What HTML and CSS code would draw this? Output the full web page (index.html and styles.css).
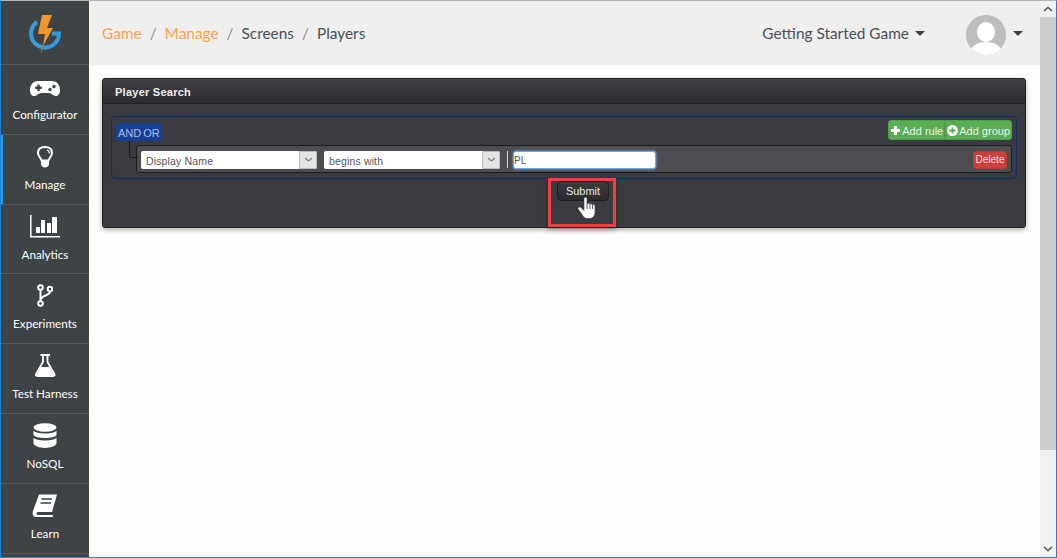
FILE: index.html
```html
<!DOCTYPE html>
<html lang="en">
<head>
<meta charset="utf-8">
<title>Player Search</title>
<link rel="stylesheet" href="styles.css">
</head>
<body>
<div class="window">
  <aside class="sidebar">
    <div class="logo">
      <svg width="36" height="40" viewBox="0 0 36 40">
        <path d="M10 9 A14 14 0 1 0 32 20.500 L25 20.500" fill="none" stroke="#3a9ad9" stroke-width="4"/>
        <path d="M15 2 L25 2 L20 15 L26 15 L16 33 L18 21 L11 21 Z" fill="#f0962e"/>
        <path d="M16 33 L14 40" stroke="#a87a3c" stroke-width="1"/>
      </svg>
    </div>
    <a class="nav-item">
      <svg class="nav-icon" width="30" height="26" viewBox="0 0 30 26"><path d="M8 7 H22 C27 7 30 11 30 16 C30 20 28 22 25.500 22 C23 22 21.500 19 19 19 H11 C8.500 19 7 22 4.500 22 C2 22 0 20 0 16 C0 11 3 7 8 7 Z" fill="#fff"/><path d="M8.500 10.500 V17 M5.200 13.800 H11.800" stroke="#3e4345" stroke-width="2.400"/><circle cx="20" cy="15.500" r="1.700" fill="#3e4345"/><circle cx="24" cy="12.500" r="1.700" fill="#3e4345"/></svg>
      <span>Configurator</span>
    </a>
    <a class="nav-item active">
      <svg class="nav-icon" width="18" height="26" viewBox="0 0 18 26"><path d="M9 3 C4.500 3 2 5.500 2 9 C2 12 4.500 13.500 5.500 16.500 H12.500 C13.500 13.500 16 12 16 9 C16 5.500 13.500 3 9 3 Z" fill="none" stroke="#fff" stroke-width="2"/><path d="M11 6 C12.500 6.500 13.500 8 13.500 9.500" fill="none" stroke="#fff" stroke-width="1.200"/><path d="M5 17 H13 V20 C13 22 11 23.500 9 23.500 C7 23.500 5 22 5 20 Z" fill="#fff"/></svg>
      <span>Manage</span>
    </a>
    <a class="nav-item">
      <svg class="nav-icon" width="30" height="26" viewBox="0 0 30 26"><path d="M.8 1 V22.800 H30" fill="none" stroke="#fff" stroke-width="1.500"/><path d="M6 13 H10 V19 H6 Z M11 6 H15 V19 H11 Z M17 9 H21 V19 H17 Z M22 3 H27 V19 H22 Z" fill="#fff"/></svg>
      <span>Analytics</span>
    </a>
    <a class="nav-item">
      <svg class="nav-icon" width="16" height="26" viewBox="0 0 16 26"><g fill="none" stroke="#fff" stroke-width="2"><circle cx="3.500" cy="4.500" r="2.300"/><circle cx="13" cy="6" r="2.300"/><circle cx="3.500" cy="20.500" r="2.300"/><path d="M3.500 7 V18 M13 8.500 C13 13 4 12 3.500 17"/></g></svg>
      <span>Experiments</span>
    </a>
    <a class="nav-item">
      <svg class="nav-icon" width="24" height="26" viewBox="0 0 24 26"><path d="M7.500 2 H17 M10 2 V9 L3 21 C2.500 22.500 3 23 4.500 23 H20 C21.500 23 22 22.500 21.500 21 L14.500 9 V2" fill="none" stroke="#fff" stroke-width="1.800"/><path d="M8 14 H16.500 L21.500 23 H3 Z" fill="#fff"/></svg>
      <span>Test Harness</span>
    </a>
    <a class="nav-item">
      <svg class="nav-icon" width="24" height="26" viewBox="0 0 24 26"><ellipse cx="12" cy="4.500" rx="11.500" ry="4.200" fill="#fff"/><path d="M.5 7.500 C2 11.500 22 11.500 23.500 7.500 V12 C22 16 2 16 .5 12 Z M.5 14.500 C2 18.500 22 18.500 23.500 14.500 V20 C22 26.500 2 26.500 .5 20 Z" fill="#fff"/></svg>
      <span>NoSQL</span>
    </a>
    <a class="nav-item">
      <svg class="nav-icon" width="26" height="26" viewBox="0 0 26 26"><path d="M7 1.500 H25 L20 19 H6 C4 19 4 22 6 22 H21 L20.500 24 H4 C1 24 0 21 1 18 Z" fill="#fff"/><path d="M9.500 6 H20 M8.500 10 H19" stroke="#3e4345" stroke-width="1.500"/></svg>
      <span>Learn</span>
    </a>
  </aside>

  <div class="main">
    <header class="topbar">
      <nav class="crumbs">
        <a class="crumb-link">Game</a><i>/</i>
        <a class="crumb-link">Manage</a><i>/</i>
        <span>Screens</span><i>/</i>
        <span>Players</span>
      </nav>
      <div class="game-select">Getting Started Game <b class="caret"></b></div>
      <div class="user">
        <svg width="40" height="40" viewBox="0 0 40 40"><defs><clipPath id="av"><circle cx="20" cy="20" r="20"/></clipPath></defs><circle cx="20" cy="20" r="20" fill="#bdbdbd"/><g clip-path="url(#av)" fill="#fff"><ellipse cx="20" cy="17" rx="9" ry="10"/><ellipse cx="20" cy="38" rx="16" ry="11"/></g></svg>
        <b class="caret"></b>
      </div>
    </header>

    <section class="content">
      <div class="panel">
        <h2 class="panel-title">Player Search</h2>
        <div class="panel-body">
          <div class="group">
            <div class="group-head">
              <div class="conds"><span>AND</span><span>OR</span></div>
              <div class="add-btns">
                <button class="btn-green"><svg width="11" height="11" viewBox="0 0 11 11"><path d="M5.500 1 V10 M1 5.500 H10" stroke="#fff" stroke-width="3"/></svg> Add rule</button>
                <button class="btn-green"><svg width="11" height="11" viewBox="0 0 11 11"><circle cx="5.500" cy="5.500" r="5.500" fill="#fff"/><path d="M5.500 2.500 V8.500 M2.500 5.500 H8.500" stroke="#5cb054" stroke-width="1.800"/></svg> Add group</button>
              </div>
            </div>
            <div class="rule">
              <div class="select wide"><span>Display Name</span><em><svg width="9" height="5" viewBox="0 0 9 5"><path d="M1 1 L4.500 4 L8 1" fill="none" stroke="#777" stroke-width="1.200"/></svg></em></div>
              <div class="select wide"><span>begins with</span><em><svg width="9" height="5" viewBox="0 0 9 5"><path d="M1 1 L4.500 4 L8 1" fill="none" stroke="#777" stroke-width="1.200"/></svg></em></div>
              <div class="sep"></div>
              <div class="value">PL</div>
              <button class="btn-red">Delete</button>
            </div>
          </div>
          <div class="submit-row"><button class="btn-submit">Submit</button></div>
        </div>
      </div>
    </section>
    <div class="highlight"></div>
    <svg class="pointer" width="19" height="23" viewBox="0 0 19 23"><path d="M7 2.500 C7 .7 10 .7 10 2.500 V8 C10.500 6.800 13 6.800 13 8.500 C13.500 7.500 15.500 7.500 15.500 9 C16 8.300 18 8.500 18 10 V16 C18 20 16 22.500 12 22.500 H10 C7 22.500 6 20 4 17 L1 13 C.2 11.500 2.500 10 4 11.500 L7 14.500 Z" fill="#fff" stroke="#333" stroke-width=".6"/><path d="M10 8 V13 M13 8.500 V13 M15.500 9 V13" stroke="#333" stroke-width=".8"/></svg>
  </div>

  <div class="scrollbar">
    <div class="sb-arrow"><svg width="10" height="6" viewBox="0 0 10 6"><path d="M1 5 L5 1.500 L9 5" fill="none" stroke="#555" stroke-width="1.600"/></svg></div>
    <div class="sb-thumb"></div>
    <div class="sb-track"></div>
    <div class="sb-arrow"><svg width="10" height="6" viewBox="0 0 10 6"><path d="M1 1 L5 4.500 L9 1" fill="none" stroke="#555" stroke-width="1.600"/></svg></div>
  </div>
</div>
</body>
</html>
```

FILE: styles.css
```css
* { box-sizing: border-box; }
html, body { margin: 0; height: 100%; overflow: hidden; }
body { font-family: "Liberation Sans", Arial, sans-serif; background: #fff; }

.window {
  display: flex;
  width: 1057px;
  height: 558px;
  border: 1px solid #1b82d6;
  border-top-color: #b5b5b5;
  overflow: hidden;
}

.sidebar {
  width: 88px;
  flex: none;
  background: #3e4345;
  color: #fff;
  overflow: hidden;
  font-family: Lato, sans-serif;
}
.logo {
  height: 64px;
  display: flex;
  align-items: center;
  justify-content: center;
  border-bottom: 1px solid #565a5c;
}
.nav-item {
  height: 69.8px;
  display: flex;
  flex-direction: column;
  align-items: center;
  border-bottom: 1px solid #565a5c;
  font-size: 11.7px;
  line-height: 16px;
  position: relative;
}
.nav-item.active::before {
  content: "";
  position: absolute;
  left: 0;
  top: 0;
  bottom: 0;
  width: 2px;
  background: #2d9be8;
}
.nav-icon { margin: 9px 0 6px; flex: none; }

.main {
  flex: 1;
  min-width: 0;
  position: relative;
  background: #fdfdfb;
  display: flex;
  flex-direction: column;
}
.topbar {
  height: 64px;
  flex: none;
  background: #f0efed;
  display: flex;
  align-items: center;
  padding: 0 17px 0 13px;
  font-family: Lato, sans-serif;
  font-size: 15.4px;
  color: #4a4f57;
}
.crumbs { flex: 1; display: flex; gap: 8px; }
.crumbs i { font-style: normal; color: #8b8f95; }
.crumb-link { color: #f7a24d; }
.game-select { margin-right: 41px; display: flex; align-items: center; gap: 6px; }
.caret {
  display: inline-block;
  width: 0;
  height: 0;
  border-left: 5px solid transparent;
  border-right: 5px solid transparent;
  border-top: 5px solid #3f3f3f;
}
.user { display: flex; align-items: center; gap: 7px; margin-top: 4px; }
.user .caret { margin-bottom: 4px; }

.content { padding: 13px 14px 0 13px; }
.panel {
  height: 150px;
  background: #3a3b40;
  border: 1px solid #222;
  border-radius: 3px;
  box-shadow: 0 2px 5px rgba(0, 0, 0, .3);
}
.panel-title {
  margin: 0;
  height: 25px;
  padding: 0 12px;
  font-size: 11px;
  line-height: 26px;
  font-weight: 700;
  letter-spacing: .25px;
  color: #eee;
  background: linear-gradient(#3f3f45, #2c2c30);
  border-bottom: 1px solid #222;
  border-radius: 3px 3px 0 0;
}
.panel-body { padding: 12px 8px 0 8px; }
.group {
  height: 63px;
  border: 1px solid #0c2a66;
  border-radius: 4px;
  padding: 3px 4px 0 4px;
}
.group-head { height: 20px; display: flex; justify-content: space-between; }
.conds {
  display: flex;
  margin-top: 3px;
  height: 18px;
  background: #173f94;
  border-radius: 3px;
  color: #a9bde4;
  font-size: 11px;
  line-height: 20px;
  padding: 0 1px 0 2px;
  gap: 2px;
}
.add-btns { display: flex; height: 20px; }
.btn-green {
  background: #5bad53;
  border: 1px solid #4f9f49;
  color: #e8f3e6;
  font: 11px/18px "Liberation Sans", Arial, sans-serif;
  padding: 1px 1px 0;
  display: flex;
  align-items: center;
  gap: 1px;
  white-space: nowrap;
}
.btn-green:first-child { border-radius: 3px 0 0 3px; }
.btn-green:last-child { border-radius: 0 3px 3px 0; }
.rule {
  margin: 5px 0 0 20px;
  height: 28px;
  width: 876px;
  display: flex;
  align-items: center;
  background: #4c4c51;
  border: 1px solid #1c1c1e;
  border-radius: 3px;
  padding: 1px 4px 0;
  position: relative;
}
.rule::before {
  content: "";
  position: absolute;
  left: -8px;
  top: -5px;
  width: 8px;
  height: 16px;
  border-left: 1px solid #1c1c1e;
  border-bottom: 1px solid #1c1c1e;
  border-radius: 0 0 0 3px;
}
.select {
  height: 18px;
  background: #fff;
  border-radius: 2px;
  display: flex;
  justify-content: space-between;
  color: #555;
  font-size: 10.5px;
  letter-spacing: .15px;
  line-height: 20px;
  padding-left: 5px;
}
.select em {
  width: 18px;
  border: 1px solid #bbb;
  border-radius: 0 2px 2px 0;
  background: #e4e4e4;
  display: flex;
  align-items: center;
  justify-content: center;
}
.wide { width: 176px; margin-right: 7px; }
.sep { width: 1px; height: 17px; background: #ddd; margin-right: 5px; }
.value {
  width: 143px;
  height: 18px;
  background: #fff;
  border: 1px solid #6aa9e0;
  box-shadow: 0 0 3px #7ab8ee;
  border-radius: 3px;
  color: #555;
  font-size: 10px;
  line-height: 18px;
  padding-left: 0;
}
.btn-red {
  margin-left: auto;
  width: 34px;
  height: 18px;
  padding: 0;
  background: #c9403e;
  border: 1px solid #b63a38;
  border-radius: 3px;
  color: #f6dede;
  font: 10px/16px "Liberation Sans", Arial, sans-serif;
}
.submit-row { display: flex; justify-content: center; padding: 2px 0 0 38px; }
.btn-submit {
  width: 52px;
  height: 20px;
  background: linear-gradient(#3c3c3c, #2b2b2b);
  border: 1px solid #1d1d1d;
  border-radius: 4px;
  color: #e8e8e8;
  font: 11px/16px "Liberation Sans", Arial, sans-serif;
  padding: 0;
}

.highlight {
  position: absolute;
  left: 459px;
  top: 177px;
  width: 68px;
  height: 49px;
  border: 3px solid #ee3f42;
  box-shadow: 0 2px 5px rgba(0, 0, 0, .4);
}
.pointer { position: absolute; left: 488px; top: 195px; }

.scrollbar {
  width: 16px;
  flex: none;
  background: #f0f0f0;
  display: flex;
  flex-direction: column;
}
.sb-arrow { height: 16px; flex: none; display: flex; align-items: center; justify-content: center; }
.sb-thumb { height: 433px; flex: none; background: #cdcdcd; }
.sb-track { flex: 1; }
```
